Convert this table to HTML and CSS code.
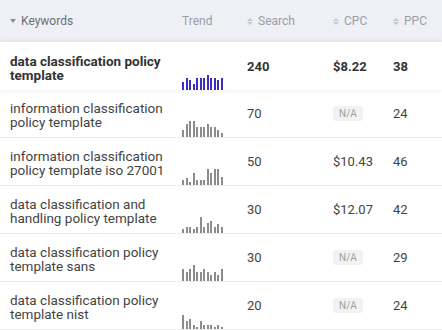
FILE: index.html
```html
<!DOCTYPE html>
<html lang="en">
<head>
    <meta charset="UTF-8">
    <meta name="viewport" content="width=device-width, initial-scale=1.0">
    <title>Keywords</title>
    <link rel="stylesheet" href="styles.css">
</head>
<body>
    <div class="kw-table">
        <div class="kw-head">
            <div class="col-keyword head-keyword"><span class="caret"></span>Keywords</div>
            <div class="col-trend">Trend</div>
            <div class="col-num"><span class="sort"></span>Search</div>
            <div class="col-num"><span class="sort"></span>CPC</div>
            <div class="col-num"><span class="sort"></span>PPC</div>
        </div>
        <div id="rows"></div>
    </div>

    <script>
        // keyword rows (trend = bar heights in px)
        const keywords = [
            { name: 'data classification policy template', search: 240, cpc: '$8.22', ppc: 38, active: true,
              trend: [8, 12, 10, 6, 12, 12, 12, 15, 12, 12, 10, 12] },
            { name: 'information classification policy template', search: 70, cpc: null, ppc: 24,
              trend: [7, 13, 16, 16, 10, 10, 10, 13, 10, 10, 7, 4] },
            { name: 'information classification policy template iso 27001', search: 50, cpc: '$10.43', ppc: 46,
              trend: [5, 7, 3, 12, 5, 5, 5, 16, 12, 16, 16, 8] },
            { name: 'data classification and handling policy template', search: 30, cpc: '$12.07', ppc: 42,
              trend: [4, 6, 6, 4, 6, 16, 6, 10, 12, 6, 9, 6] },
            { name: 'data classification policy template sans', search: 30, cpc: null, ppc: 29,
              trend: [12, 9, 12, 16, 9, 9, 12, 9, 6, 9, 6, 12] },
            { name: 'data classification policy template nist', search: 20, cpc: null, ppc: 24,
              trend: [14, 8, 10, 4, 2, 8, 4, 4, 4, 2, 4, 2] }
        ];

        const rowsDiv = document.getElementById('rows');
        keywords.forEach(kw => {
            const bars = kw.trend.map(h => `<span class="bar" style="height: ${h}px"></span>`).join('');
            const cpc = kw.cpc ? kw.cpc : '<span class="na">N/A</span>';
            const row = document.createElement('div');
            row.className = kw.active ? 'kw-row active' : 'kw-row';
            row.innerHTML = `
                <div class="col-keyword">${kw.name}</div>
                <div class="col-trend"><div class="spark">${bars}</div></div>
                <div class="col-num">${kw.search}</div>
                <div class="col-num">${cpc}</div>
                <div class="col-num">${kw.ppc}</div>`;
            rowsDiv.appendChild(row);
        });
    </script>
</body>
</html>
```

FILE: styles.css
```css
body {
    margin: 0;
    font-family: Roboto, 'Liberation Sans', sans-serif;
    background-color: #fff;
    color: #444;
}

.kw-table {
    width: 442px;
    overflow: hidden;
}

.kw-head,
.kw-row {
    display: grid;
    grid-template-columns: 182px 65px 86px 60px 1fr;
}

.kw-head {
    height: 42px;
    align-items: center;
    background-color: #eef0f5;
    font-size: 12px;
    color: #9a9ea6;
}

.head-keyword {
    display: flex;
    align-items: center;
    color: #6b6f77;
}

.caret {
    width: 0;
    height: 0;
    border-left: 3.5px solid transparent;
    border-right: 3.5px solid transparent;
    border-top: 4px solid #8a8e96;
    margin-right: 5px;
}

.kw-head .col-num {
    display: flex;
    align-items: center;
}

.sort {
    display: flex;
    flex-direction: column;
    gap: 1px;
    margin-right: 5px;
}

.sort::before,
.sort::after {
    content: '';
    width: 0;
    height: 0;
    border-left: 3.5px solid transparent;
    border-right: 3.5px solid transparent;
}

.sort::before {
    border-bottom: 3.5px solid #c3c7ce;
}

.sort::after {
    border-top: 3.5px solid #c3c7ce;
}

.kw-row {
    height: 48px;
    border-bottom: 1px solid #ebebeb;
    box-sizing: border-box;
    background-color: #fff;
    font-size: 13px;
}

.kw-row.active {
    position: relative;
    border-bottom: none;
    box-shadow: 0 0 6px rgba(0, 0, 0, 0.09);
    font-weight: bold;
    color: #333;
}

.col-keyword {
    padding: 0 10px;
}

.kw-row .col-keyword {
    display: flex;
    align-items: center;
    padding-top: 3px;
    font-size: 13.5px;
    line-height: 14px;
    color: #444;
}

.kw-row.active .col-keyword {
    color: #333;
}

.kw-row .col-num {
    display: flex;
    align-items: center;
}

.kw-row .col-trend {
    display: flex;
    align-items: flex-end;
}

.spark {
    display: flex;
    align-items: flex-end;
    gap: 1.5px;
}

.bar {
    width: 2px;
    background-color: #8c8c8c;
}

.active .bar {
    background-color: #3a2fc2;
}

.na {
    font-size: 10px;
    font-weight: normal;
    color: #a0a0a0;
    background-color: #f2f2f2;
    border-radius: 3px;
    padding: 2px 6px;
}
```
